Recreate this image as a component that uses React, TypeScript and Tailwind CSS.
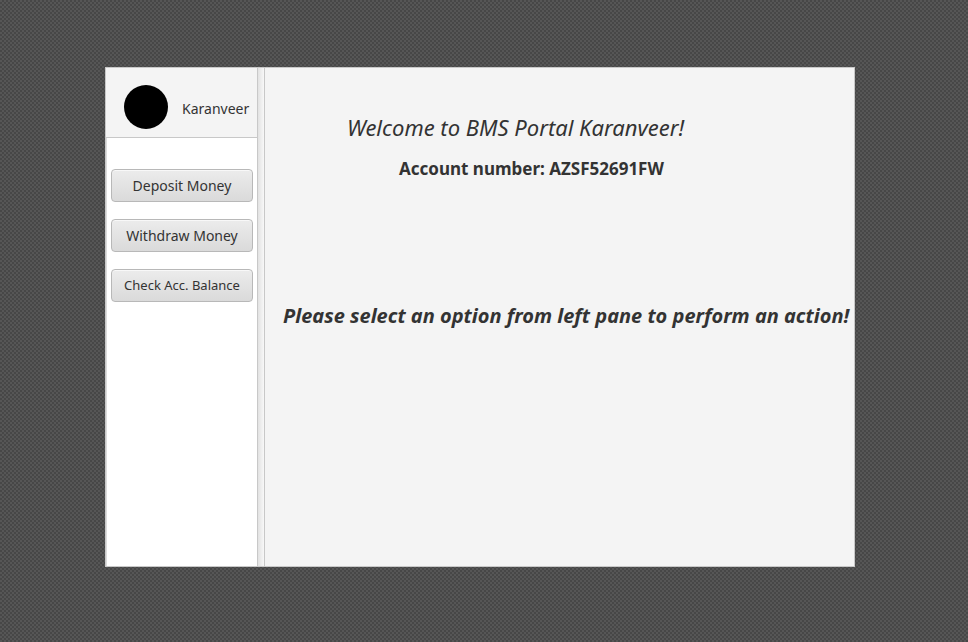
const texture =
  'bg-[#4c4c4c] bg-[conic-gradient(#474747_25%,#565656_0_50%,#474747_0_75%,#565656_0)] bg-[length:4px_4px]';

const buttonBase =
  'h-[33px] rounded-[4px] border border-[#b8b8b8] bg-linear-to-b from-[#ececec] to-[#dadada] text-center whitespace-nowrap text-[#333333] shadow-[inset_0_1px_0_#f8f8f8]';

export default function App() {
  return (
    <div
      className={`flex min-h-screen items-center justify-center pt-[67px] pr-[113px] pb-[75px] pl-[105px] font-['Noto_Sans','Open_Sans',sans-serif] text-[#333333] ${texture}`}
    >
      <main className="flex min-h-[500px] flex-1 border border-[#c8c8c8] bg-[#f4f4f4]">
        <aside className="flex w-[152px] shrink-0 flex-col border-r border-[#c8c8c8]">
          <header className="flex h-[70px] items-center gap-[14px] border-b border-[#c8c8c8] pt-[9px] pl-[18px]">
            <div className="size-11 shrink-0 rounded-full bg-black" />
            <span className="pt-[3px] text-[14px] leading-5">Karanveer</span>
          </header>
          <nav className="flex flex-1 flex-col gap-[17px] border-l border-[#dcdcdc] bg-white pt-[31px] pr-1 pl-1">
            <button type="button" className={`${buttonBase} text-[14px]`}>Deposit Money</button>
            <button type="button" className={`${buttonBase} text-[14px]`}>Withdraw Money</button>
            <button type="button" className={`${buttonBase} text-[13px]`}>Check Acc. Balance</button>
          </nav>
        </aside>
        <div className="w-[7px] shrink-0 border-r border-[#c8c8c8] bg-linear-to-r from-[#e2e2e2] to-[#f8f8f8]" />
        <section className="flex flex-1 flex-col pt-[43px] pl-[18px] whitespace-nowrap">
          <h1 className="pl-16 text-[22px] leading-8 italic">Welcome to BMS Portal Karanveer!</h1>
          <p className="mt-[14px] pl-[116px] text-[17px] leading-6 font-bold">Account number: AZSF52691FW</p>
          <p className="mt-[121px] text-[20px] leading-7 font-bold italic">
            Please select an option from left pane to perform an action!
          </p>
        </section>
      </main>
    </div>
  );
}
